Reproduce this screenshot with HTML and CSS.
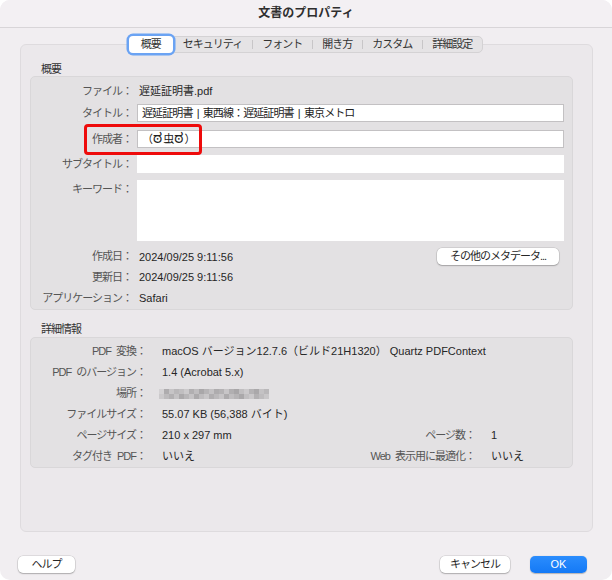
FILE: index.html
```html
<!DOCTYPE html>
<html lang="ja">
<head>
<meta charset="utf-8">
<title>文書のプロパティ</title>
<link rel="stylesheet" href="styles.css">
</head>
<body>
<div class="win">
  <div class="titlebar">文書のプロパティ</div>
  <div class="tabbar">
    <div class="tabs">
      <div class="tab sel">概要</div>
      <div class="tab">セキュリティ</div>
      <div class="tab sep">フォント</div>
      <div class="tab sep">開き方</div>
      <div class="tab sep">カスタム</div>
      <div class="tab sep">詳細設定</div>
    </div>
  </div>
  <div class="panel">
    <div class="sec-label">概要</div>
    <div class="box summary">
      <div class="lbl">ファイル：</div>
      <div class="val">遅延証明書.pdf</div>

      <div class="lbl">タイトル：</div>
      <div class="field b">遅延証明書 | 東西線：遅延証明書 | 東京メトロ</div>

      <div class="lbl">作成者：</div>
      <div class="field b">（<span class="eye">ಠ</span>虫<span class="eye">ಠ</span>）</div>

      <div class="lbl">サブタイトル：</div>
      <div class="field"></div>

      <div class="lbl">キーワード：</div>
      <div class="field tall"></div>

      <div class="lbl mid">作成日：</div>
      <div class="rowval">
        <span>2024/09/25 9:11:56</span>
        <span class="btn meta">その他のメタデータ...</span>
      </div>

      <div class="lbl mid">更新日：</div>
      <div class="val mid">2024/09/25 9:11:56</div>

      <div class="lbl mid">アプリケーション：</div>
      <div class="val mid">Safari</div>

      <div class="highlight"></div>
    </div>

    <div class="sec-label second">詳細情報</div>
    <div class="box details">
      <div class="lbl">PDF 変換：</div>
      <div class="v span">macOS バージョン12.7.6（ビルド21H1320） Quartz PDFContext</div>

      <div class="lbl">PDF のバージョン：</div>
      <div class="v span">1.4 (Acrobat 5.x)</div>

      <div class="lbl">場所：</div>
      <div class="v span blurcell"><span class="blur"></span></div>

      <div class="lbl">ファイルサイズ：</div>
      <div class="v span">55.07 KB (56,388 バイト)</div>

      <div class="lbl">ページサイズ：</div>
      <div class="v">210 x 297 mm</div>
      <div class="lbl">ページ数：</div>
      <div class="v">1</div>

      <div class="lbl">タグ付き PDF：</div>
      <div class="v">いいえ</div>
      <div class="lbl">Web 表示用に最適化：</div>
      <div class="v">いいえ</div>
    </div>
  </div>
  <div class="footer">
    <span class="btn help">ヘルプ</span>
    <span class="btn cancel">キャンセル</span>
    <span class="btn ok">OK</span>
  </div>
</div>
</body>
</html>
```
FILE: styles.css
```css
* { box-sizing: border-box; }
html, body { margin: 0; padding: 0; }
body {
  background: #ffffff;
  font-family: "Liberation Sans", "Noto Sans CJK JP", "Noto Sans", sans-serif;
  font-size: 11px;
  color: #262626;
}
.win {
  width: 612px;
  height: 580px;
  background: #f1eef1;
  border-radius: 10px;
  overflow: hidden;
}
.titlebar {
  height: 28px;
  border-bottom: 1px solid #d8d5d8;
  background: #f3f0f3;
  text-align: center;
  line-height: 27px;
  font-size: 12px;
  font-weight: bold;
  color: #2e2e2e;
}
.tabbar {
  display: flex;
  justify-content: center;
  margin: 8px 0 -9px;
  position: relative;
  z-index: 1;
}
.tabs {
  display: flex;
  height: 17px;
  background: #e5e3e5;
  border: 1px solid #d4d2d4;
  border-radius: 5px;
}
.tab {
  position: relative;
  padding: 0 10px;
  line-height: 15px;
  letter-spacing: -1px;
  color: #333;
}
.tab.sel {
  background: #fff;
  border-radius: 4px;
  margin: -1px 0 -1px -1px;
  line-height: 17px;
  padding: 0 12px;
  box-shadow: 0 0 0 2.5px #6ba3f3;
}
.tab.sep::before {
  content: "";
  position: absolute;
  left: 0;
  top: 3px;
  width: 1px;
  height: 9px;
  background: #c8c6c8;
}
.panel {
  margin: 0 19px 0 20px;
  height: 488px;
  background: #ebe8eb;
  border: 1px solid #dedbde;
  border-radius: 6px;
  padding: 18px 19px 0 9px;
}
.sec-label {
  margin-left: 11px;
  line-height: 13px;
  color: #333;
  letter-spacing: -1px;
}
.sec-label.second {
  margin-top: 12px;
  margin-bottom: 1px;
  line-height: 14px;
}
.box {
  background: #e3e1e3;
  border: 1px solid #d9d7d9;
  border-radius: 5px;
}
.summary {
  position: relative;
  display: grid;
  grid-template-columns: 101px 1fr;
  grid-template-rows: 22px 26px 25px 25px 66px 21px 21px 21px;
  column-gap: 5px;
  padding: 5px 8px 0 0;
}
.lbl {
  text-align: right;
  color: #555;
  letter-spacing: -1px;
  word-spacing: 3px;
  line-height: 18px;
  white-space: nowrap;
}
.val {
  line-height: 18px;
  padding-left: 2px;
  white-space: nowrap;
}
.summary .mid { line-height: 21px; }
.field {
  background: #fff;
  height: 18px;
  line-height: 18px;
  padding-left: 5px;
  letter-spacing: -0.9px;
  word-spacing: 2px;
  white-space: nowrap;
  color: #222;
}
.field.b {
  border: 1px solid #c3c1c3;
  line-height: 16px;
  padding-left: 4px;
}
.field.tall { height: 61px; }
.eye {
  font-family: "Noto Sans Kannada", "Noto Sans", sans-serif;
  font-size: 14px;
  line-height: 14px;
  letter-spacing: 0;
  padding: 0 1px;
}
.rowval {
  display: flex;
  align-items: center;
  justify-content: space-between;
  padding: 0 5px 0 2px;
}
.btn {
  display: inline-block;
  background: #fff;
  border-radius: 5px;
  height: 17px;
  line-height: 17px;
  padding: 0 11px;
  text-align: center;
  letter-spacing: -1px;
  color: #262626;
  box-shadow: 0 0 0 0.5px rgba(0,0,0,0.16), 0 1px 1.5px rgba(0,0,0,0.22);
}
.btn.meta { width: 122px; padding: 0; }
.highlight {
  position: absolute;
  left: 53px;
  top: 47px;
  width: 118px;
  height: 31px;
  border: 3px solid #ee0b0b;
  border-radius: 4px;
}
.details {
  display: grid;
  grid-template-columns: 115px 1fr auto 97px;
  grid-auto-rows: 21px;
  padding-top: 3px;
}
.details .lbl { line-height: 21px; }
.details .v {
  line-height: 21px;
  padding-left: 16px;
  white-space: nowrap;
}
.details .span { grid-column: 2 / -1; }
.blurcell { display: flex; align-items: center; }
.blur {
  display: block;
  width: 110px;
  height: 10px;
  margin-left: -3px;
  background:
    linear-gradient(to right, #d3d1d3 0 5px, #aeacae 5px 10px, #c6c4c6 10px 15px, #b9b7b9 15px 20px, #c0bec0 20px 25px, #cbc9cb 25px 30px, #b1afb1 30px 35px, #bfbdbf 35px 40px, #a9a7a9 40px 45px, #b6b4b6 45px 50px, #c3c1c3 50px 55px, #aeacae 55px 60px, #b4b2b4 60px 65px, #c7c5c7 65px 70px, #b1afb1 70px 75px, #a8a6a8 75px 80px, #c0bec0 80px 85px, #cbc9cb 85px 90px, #b5b3b5 90px 95px, #aaa8aa 95px 100px, #c4c2c4 100px 105px, #bab8ba 105px 110px) 0 0 / 100% 50% no-repeat,
    linear-gradient(to right, #cbc9cb 0 5px, #bdbbbd 5px 10px, #b2b0b2 10px 15px, #c4c2c4 15px 20px, #aba9ab 20px 25px, #b8b6b8 25px 30px, #c5c3c5 30px 35px, #acaaac 35px 40px, #bebcbe 40px 45px, #c8c6c8 45px 50px, #b0aeb0 50px 55px, #bbb9bb 55px 60px, #c6c4c6 60px 65px, #adabad 65px 70px, #bfbdbf 70px 75px, #b6b4b6 75px 80px, #aaa8aa 80px 85px, #c1bfc1 85px 90px, #cac8ca 90px 95px, #b3b1b3 95px 100px, #bebcbe 100px 105px, #c9c7c9 105px 110px) 0 100% / 100% 50% no-repeat;
}
.footer {
  display: flex;
  margin-top: 24px;
  padding: 0 25px 0 18px;
}
.btn.help { width: 57px; padding: 0; }
.btn.cancel { width: 70px; padding: 0; margin-left: auto; }
.btn.ok {
  width: 57px;
  padding: 0;
  margin-left: 20px;
  background: linear-gradient(#2b8dfd, #1479f6);
  color: #fff;
  letter-spacing: 0;
  box-shadow: 0 0.5px 1px rgba(0,0,0,0.25);
}
```
